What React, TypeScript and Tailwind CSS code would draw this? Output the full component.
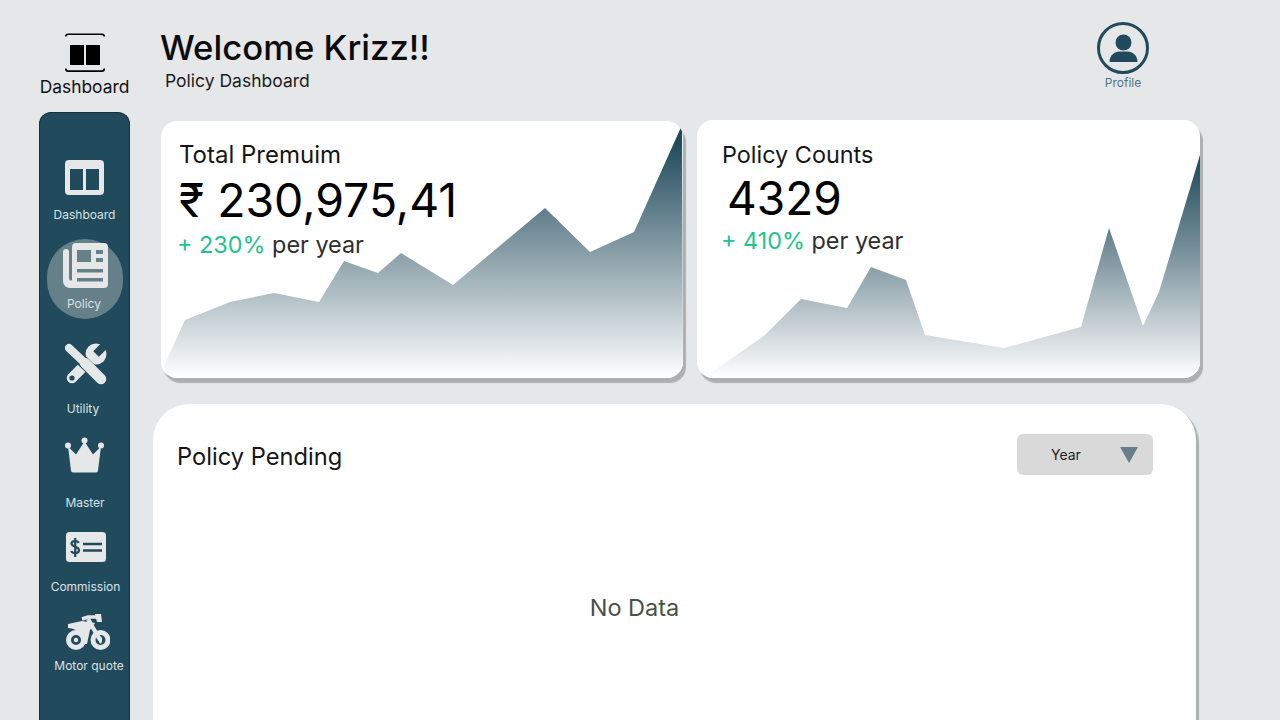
import React from "react";

function DashIcon({ className }: { className: string }) {
  return (
    <svg viewBox="0 0 39 35" className={className}>
      <path fillRule="evenodd" fill="currentColor" d="M4 0H35A4 4 0 0 1 39 4V31A4 4 0 0 1 35 35H4A4 4 0 0 1 0 31V4A4 4 0 0 1 4 0ZM5 9V30H18V9ZM21 9V30H34V9Z" />
    </svg>
  );
}

function News({ className }: { className: string }) {
  return (
    <svg viewBox="0 0 45 45" className={className}>
      <path
        fillRule="evenodd"
        fill="currentColor"
        d="M13 0H41A4 4 0 0 1 45 4V41A4 4 0 0 1 41 45H7A7 7 0 0 1 0 38V9A2.5 2.5 0 0 1 6 9V36A2 2 0 0 0 9 37V4A4 4 0 0 1 13 0ZM14 7V19H28V7ZM33 7V11H40V7ZM33 15V19H40V15ZM14 26V29.5H40V26ZM14 35V38.5H40V35Z"
      />
    </svg>
  );
}

function Tools({ className }: { className: string }) {
  return (
    <svg viewBox="0 0 42 42" className={className}>
      <path d="M7 35L30 12" stroke="currentColor" strokeWidth="10.5" strokeLinecap="round" />
      <circle cx="31" cy="11" r="10.5" fill="currentColor" />
      <path d="M31 11L42 0" stroke="#214b5c" strokeWidth="8" />
      <circle cx="7" cy="35" r="2.6" fill="#214b5c" />
      <path d="M5 6L37 37" stroke="#214b5c" strokeWidth="11.5" />
      <path d="M4 5L22 22" stroke="currentColor" strokeWidth="8" strokeLinecap="round" />
      <path d="M20 20L36 36" stroke="currentColor" strokeWidth="10.5" strokeLinecap="round" />
    </svg>
  );
}

function Crown({ className }: { className: string }) {
  return (
    <svg viewBox="0 0 39 35" className={className}>
      <circle cx="3" cy="8" r="3" fill="currentColor" />
      <circle cx="19.5" cy="3" r="3" fill="currentColor" />
      <circle cx="36" cy="8" r="3" fill="currentColor" />
      <path fill="currentColor" d="M3 9L11 17L19.5 4L28 17L36 9L33 33Q33 35 31 35H8Q6 35 6 33Z" />
    </svg>
  );
}

function Commission({ className }: { className: string }) {
  return (
    <svg viewBox="0 0 40 30" className={className}>
      <rect width="40" height="30" rx="3.5" fill="currentColor" />
      <path d="M12.5 11C12 8.5 6 8 5.5 11.5C5.5 15.5 13 13.5 13 18.5C12.5 22 6 21.5 5.3 19M9.2 6V25" stroke="#214b5c" strokeWidth="2.2" fill="none" />
      <path d="M17 12H36M17 18.5H36" stroke="#214b5c" strokeWidth="2.6" />
    </svg>
  );
}

function Moto({ className }: { className: string }) {
  return (
    <svg viewBox="0 0 44 37" className={className}>
      <circle cx="10" cy="26" r="7.5" fill="none" stroke="currentColor" strokeWidth="5" />
      <circle cx="10" cy="26" r="2.2" fill="currentColor" />
      <circle cx="34.5" cy="26" r="7.5" fill="none" stroke="currentColor" strokeWidth="5" />
      <ellipse cx="34.5" cy="26" rx="1.6" ry="3.5" fill="currentColor" />
      <path fill="currentColor" d="M2 10L16 7L29 9L24 16L21 30L16 30C17 21 13 15 2 14Z" />
      <path d="M22 5L34 26" stroke="currentColor" strokeWidth="4.2" />
      <path d="M16 5L22 3H33" stroke="currentColor" strokeWidth="3.5" fill="none" />
      <path fill="currentColor" d="M29 0H35L36 8H31Z" />
    </svg>
  );
}

function Profile() {
  return (
    <svg viewBox="0 0 52 52" className="w-[52px] h-[52px]">
      <circle cx="26" cy="26" r="24.5" fill="none" stroke="#214b5c" strokeWidth="3" />
      <circle cx="26.5" cy="20.5" r="8" fill="#214b5c" />
      <path d="M12.5 40C12.5 33 18 29.5 22 29.5H31C35 29.5 40.5 33 40.5 40Z" fill="#214b5c" />
    </svg>
  );
}

function Chart({ id, points, top }: { id: string; points: string; top: number }) {
  return (
    <svg className="absolute inset-0 w-full h-full" preserveAspectRatio="none">
      <defs>
        <linearGradient id={id} x1="0" y1="0" x2="0" y2="1">
          <stop offset="0" stopColor="#1f4a5c" />
          <stop offset={top} stopColor="#1f4a5c" />
          <stop offset="0.45" stopColor="#7c949e" />
          <stop offset="1" stopColor="#ffffff" />
        </linearGradient>
      </defs>
      <polygon points={points} fill={`url(#${id})`} />
    </svg>
  );
}

export default function App() {
  const shadow = "shadow-[3px_5px_1px_0_#adb0b1]";
  return (
    <div className="w-[1280px] h-[720px] overflow-hidden bg-[#e5e7e9] flex text-black" style={{ fontFamily: "Inter, sans-serif" }}>
      <aside className="w-[153px] shrink-0 pl-[39px] flex flex-col">
        <div className="w-[91px] h-[112px] flex flex-col items-center pt-[33px]">
          <svg viewBox="0 0 40 40" className="w-[40px] h-[40px] shrink-0">
            <path d="M0.7 3.5Q0.7 1.2 3 1.2H37Q39.3 1.2 39.3 3.5" fill="none" stroke="#000" strokeWidth="1.6" />
            <path d="M0.7 35.5Q0.7 38.2 3 38.2H37Q39.3 38.2 39.3 35.5" fill="none" stroke="#000" strokeWidth="1.8" />
            <rect x="5" y="12" width="14" height="20" fill="#000" />
            <rect x="21" y="12" width="14" height="20" fill="#000" />
          </svg>
          <div className="text-[17.4px] leading-[20px] mt-[4px] text-[#111] whitespace-nowrap">Dashboard</div>
        </div>
        <nav className="w-[91px] flex-1 bg-[#214b5c] rounded-t-[12px] border border-[#1a2e36] border-b-0 text-[#dbe1e4] text-[12px] leading-[14px] flex flex-col">
          <div className="mt-[47px] flex flex-col items-center">
            <DashIcon className="w-[39px] h-[35px] text-[#e5e7e9]" />
            <div className="mt-[13px]">Dashboard</div>
          </div>
          <div className="mt-[17px] mx-[7px] w-[76px] h-[80px] rounded-full bg-[#668089] flex flex-col items-center pt-[5px]">
            <News className="w-[45px] h-[45px] -mt-[1px] text-[#e5e7e9]" />
            <div className="mt-[9px] -ml-[2px]">Policy</div>
          </div>
          <div className="mt-[24px] flex flex-col items-center -ml-[3px]">
            <Tools className="w-[42px] h-[42px] ml-[5px] text-[#e5e7e9]" />
            <div className="mt-[17px]">Utility</div>
          </div>
          <div className="mt-[21px] flex flex-col items-center ml-[1px]">
            <Crown className="w-[39px] h-[36px] text-[#e5e7e9] -ml-[1px]" />
            <div className="mt-[23px]">Master</div>
          </div>
          <div className="mt-[22px] flex flex-col items-center ml-[2px]">
            <Commission className="w-[40px] h-[30px] text-[#e5e7e9]" />
            <div className="mt-[18px]">Commission</div>
          </div>
          <div className="mt-[20px] flex flex-col items-center ml-[9px]">
            <Moto className="w-[44px] h-[37px] text-[#e5e7e9] -ml-[2px]" />
            <div className="mt-[8px] whitespace-nowrap">Motor quote</div>
          </div>
        </nav>
      </aside>

      <main className="flex-1 min-w-0 flex flex-col">
        <header className="h-[120px] flex shrink-0 relative">
          <div className="pl-[7px] pt-[26px] flex-1">
            <h1 className="text-[34.7px] leading-[42px] font-medium text-[#0c0c0c]">Welcome Krizz!!</h1>
            <div className="text-[17.5px] leading-[22px] ml-[5px] text-[#1c1c1c] mt-[2px]">Policy Dashboard</div>
          </div>
          <div className="w-[52px] mr-[131px] pt-[22px] flex flex-col items-center">
            <Profile />
            <div className="text-[12px] leading-[16px] text-[#55737f] mt-[1px]">Profile</div>
          </div>
        </header>

        <div className="flex ml-[8px] w-[1039px] gap-[14px] h-[258px] shrink-0">
          <section className={`relative w-[522px] mt-[1px] h-[257px] bg-white rounded-[16px] overflow-hidden ${shadow}`}>
            <Chart id="a" top={0.06} points="2,247 24,199 69,181 113,172 158,181 183,140 217,152 240,132 292,164 384,87 429,131 473,111 521,4 522,257 12,257" />
            <div className="relative pl-[18px] pt-[19px]">
              <div className="text-[24px] leading-[30px] text-[#161616]">Total Premuim</div>
              <div className="text-[46.4px] leading-[56px] mt-[2px]">₹ 230,975,41</div>
              <div className="text-[23.4px] leading-[30px] mt-[2px] -ml-[2px] text-[#2e2e2e]"><span className="text-[#1fc48f]">+ 230%</span> per year</div>
            </div>
          </section>
          <section className={`relative w-[503px] h-[258px] bg-white rounded-[16px] overflow-hidden ${shadow}`}>
            <Chart id="b" top={0.02} points="8,257 68,215 104,179 150,188 174,147 209,160 228,215 307,228 384,207 412,108 446,206 462,172 503,35 503,258 8,258" />
            <div className="relative pl-[25px] pt-[20px]">
              <div className="text-[23.4px] leading-[30px] text-[#161616]">Policy Counts</div>
              <div className="text-[46px] leading-[56px] ml-[5px]">4329</div>
              <div className="text-[23.4px] leading-[30px] -ml-[1px] text-[#2e2e2e]"><span className="text-[#1fc48f]">+ 410%</span> per year</div>
            </div>
          </section>
        </div>

        <section className="mt-[26px] w-[1043px] flex-1 bg-white rounded-t-[36px] shadow-[3px_3px_1px_0_#adb0b1] flex flex-col">
          <div className="flex items-start justify-between pl-[24px] pr-[43px] pt-[30px]">
            <div className="text-[23.7px] leading-[45px] text-[#161616]">Policy Pending</div>
            <div className="w-[136px] h-[41px] bg-[#d9d9d9] rounded-[6px] flex items-center justify-between pl-[34px] pr-[15px] text-[14px] text-[#222]">
              <span>Year</span>
              <svg viewBox="0 0 18 16" className="w-[18px] h-[16px]"><path d="M0 0H18L9 16Z" fill="#668089" /></svg>
            </div>
          </div>
          <div className="text-center text-[23.5px] leading-[30px] text-[#48514a] mt-[114px] pr-[80px]">No Data</div>
        </section>
      </main>
    </div>
  );
}
